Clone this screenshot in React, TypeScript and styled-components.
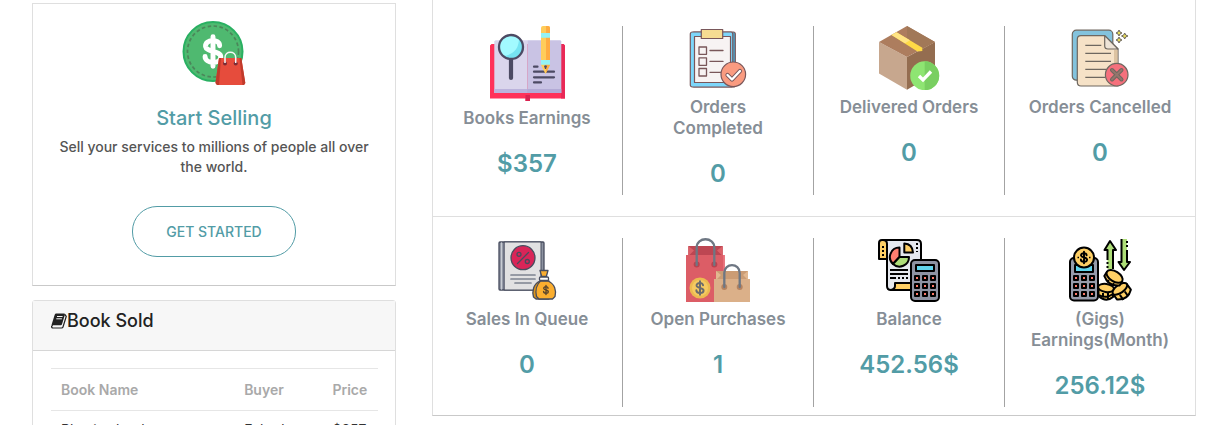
import React from 'react';
import styled, { createGlobalStyle } from 'styled-components';

const GlobalStyle = createGlobalStyle`
  *, *::before, *::after { box-sizing: border-box; }
  html { scrollbar-width: none; }
  body { margin: 0; background: #fff; font-family: Inter, "Liberation Sans", sans-serif; }
  h2, h3, p { margin: 0; }
`;

const teal = '#529ca6';

const Page = styled.main`
  display: grid;
  grid-template-columns: 91fr 191fr;
  gap: 36px;
  align-items: start;
  padding: 0 14px 0 32px;
`;

const Sidebar = styled.div`
  display: flex;
  flex-direction: column;
  gap: 14px;
  padding-top: 3px;
`;

const SellCard = styled.section`
  display: flex;
  flex-direction: column;
  align-items: center;
  padding: 17px 22px 28px;
  border: 1px solid #dfdfdf;
  border-bottom-color: #c9c9c9;
  text-align: center;
`;

const SellTitle = styled.h2`
  margin-top: 19px;
  color: ${teal};
  font-size: 20px;
  font-weight: 500;
  line-height: 28px;
`;

const SellText = styled.p`
  margin-top: 5px;
  color: #555;
  font-size: 14px;
  font-weight: 500;
  line-height: 20px;
`;

const OutlineButton = styled.button`
  margin-top: 29px;
  padding: 0 33px;
  height: 51px;
  border: 1px solid ${teal};
  border-radius: 25px;
  background: #fff;
  color: ${teal};
  font-family: inherit;
  font-size: 14px;
  font-weight: 500;
  text-transform: uppercase;
`;

const SoldCard = styled.section`
  border: 1px solid #dfdfdf;
  border-radius: 3px;
`;

const SoldHeader = styled.header`
  display: flex;
  align-items: flex-start;
  height: 50px;
  padding: 8px 18px;
  border-bottom: 1px solid #d6d6d6;
  background: #f7f7f7;
  color: #222;

  svg { margin-top: 4px; }
`;

const SoldTitle = styled.h3`
  font-size: 18px;
  font-weight: 500;
  line-height: 24px;
`;

const SoldBody = styled.div`
  padding: 17px 17px 17px 18px;
`;

const Table = styled.table`
  width: 100%;
  border-collapse: collapse;
  font-size: 14px;
  text-align: left;
`;

const HeadCell = styled.th<{ $width?: string }>`
  width: ${(p) => p.$width ?? 'auto'};
  height: 42px;
  padding: 0 10px;
  border-top: 1px solid #e6e6e6;
  border-bottom: 1px solid #e6e6e6;
  color: #a9a9a9;
  font-weight: 600;
`;

const BodyCell = styled.td`
  padding: 9px 10px;
  color: #333;
  line-height: 20px;
`;

const StatsCard = styled.section`
  border: 1px solid #dfdfdf;
  border-top: 0;
  border-bottom-color: #c9c9c9;
`;

const StatsRow = styled.div<{ $first?: boolean }>`
  display: grid;
  grid-template-columns: repeat(4, 1fr);
  margin: 0 -1px;
  padding: ${(p) => (p.$first ? '26px 0 21px' : '21px 0 8px')};
  border-bottom: ${(p) => (p.$first ? '1px solid #dfdfdf' : '0')};
`;

const Stat = styled.div`
  display: flex;
  flex-direction: column;
  align-items: center;
  padding: 0 21px 6px;
  border-right: 1px solid #a3a3a3;
  text-align: center;

  &:last-child { border-right-color: transparent; }
`;

const StatLabel = styled.h3`
  margin-top: 7px;
  color: #868e96;
  font-size: 17px;
  font-weight: 600;
  line-height: 21px;
`;

const StatValue = styled.p`
  margin-top: 19px;
  color: ${teal};
  font-size: 24px;
  font-weight: 600;
  line-height: 31px;
`;

const Icon = styled.svg.attrs({ 'aria-hidden': true })<{ $size?: number }>`
  display: block;
  flex: none;
  width: ${(p) => p.$size ?? 64}px;
  height: ${(p) => p.$size ?? 64}px;
`;

const Dollar = ({ x, y, s, color, w }: { x: number; y: number; s: number; color: string; w: number }) => (
  <path
    transform={`translate(${x} ${y}) scale(${s})`}
    d="M4 -3.5C4 -8 -5 -7.5 -4.5 -3C-4 .5 5 -.5 4.7 3.4C4.4 7.8 -4.8 7.6 -4.8 3M0 -9V9"
    fill="none" stroke={color} strokeWidth={w} strokeLinecap="round"
  />
);

const SellIcon = () => (
  <Icon viewBox="0 0 64 64">
    <circle cx="31" cy="30.500" r="29.500" fill="#4fb970" stroke="#29b062" strokeWidth="2" />
    <circle cx="31" cy="30.500" r="25.500" fill="none" stroke="#4b865a" strokeWidth="1.700" strokeDasharray="3.500 2.500" />
    <Dollar x={31} y={30.5} s={1.65} color="#fff" w={3} />
    <path d="M37 37H59.300L63.300 62L62 64H35L33.500 62Z" fill="#e64c3c" />
    <path d="M37 37H39L37 64H35L33.500 62ZM57.500 37H59.300L63.300 62L62 64H60.500Z" fill="#c03a2b" />
    <circle cx="43" cy="42.500" r="2" fill="#7d2c35" /><circle cx="53.700" cy="42.500" r="2" fill="#7d2c35" />
    <path d="M43 42V36.500C43 29.500 53.700 29.500 53.700 36.500V42" fill="none" stroke="#f7f7f7" strokeWidth="1.500" />
  </Icon>
);

const BookIcon = () => (
  <svg width="16" height="16" viewBox="0 0 16 16" aria-hidden="true">
    <path d="M13.800 1.500L15.300 3.300L12 14Q11.700 15 10.500 15H2Q.3 14.800 .6 12.800" fill="none" stroke="#222" strokeWidth="1.200" strokeLinejoin="round" />
    <path d="M5.200 .5H13Q14.200 .5 13.900 1.700L11 11.300Q10.700 12.200 9.700 12.200H2.200Q1.600 12.200 1.800 13.200H.7Q.3 12 .9 10.800L3.700 1.800Q4.100 .5 5.200 .5Z" fill="#222" />
    <path d="M6 3.500H11.600M5.300 5.800H10.900" stroke="#f7f7f7" strokeWidth="1" />
  </svg>
);

const EarningsIcon = () => (
  <Icon $size={75} viewBox="0 0 75 75">
    <path d="M1.500 18H73.500L75 19.500V72.500H40V75H35.500V72.500H0V19.500Z" fill="#ff3159" />
    <path d="M71 18H73.500L75 19.500V72.500H71Z" fill="#e92957" /><path d="M35.500 69H40V75H35.500Z" fill="#d92250" />
    <path d="M4.300 15.500L5.500 14.300H37.300V67H4.300Z" fill="#dad5ec" /><path d="M37.300 14.300H70.500L71.300 15.500V67H37.300Z" fill="#c9c3e4" />
    <path d="M4.300 63H37.300V67H4.300Z" fill="#bbb3dc" /><path d="M37.300 63H71.300V67H37.300Z" fill="#b3abd6" />
    <path d="M21 34V52" stroke="#4c4a63" strokeWidth="4.200" strokeLinecap="round" />
    <circle cx="21" cy="21" r="12" fill="#a2faff" /><path d="M29 12A12 12 0 0 1 13 30Q29 28 29 12Z" fill="#76e4f2" />
    <circle cx="21" cy="21" r="12" fill="none" stroke="#4c4a63" strokeWidth="2.300" />
    <path d="M44 40.700H47.500M44 45.700H64M44 51.300H64M44 56.400H51" stroke="#4c4a63" strokeWidth="2.200" strokeLinecap="round" />
    <path d="M51 2Q51 0 53 0H58Q60 0 60 2V39L55.500 48L51 39Z" fill="#ffcd5a" /><path d="M56 0H58Q60 0 60 2V39L56 47Z" fill="#ffac42" />
    <path d="M51 7H60V11.700H51ZM51 34H60V38.700H51Z" fill="#94f3f5" /><path d="M54 40Q55.500 38.500 57 40L56 43H55Z" fill="#4c4a63" />
  </Icon>
);

const CompletedIcon = () => (
  <Icon viewBox="0 0 64 64" stroke="#79575a" strokeWidth="1.200" strokeLinejoin="round" strokeLinecap="round">
    <rect x="6" y="6" width="43.300" height="55" rx="2" fill="#4aa9d3" />
    <rect x="4.300" y="6" width="42.500" height="55" rx="2" fill="#7dd6fa" />
    <path d="M8.500 10.500H44.500V56.500H8.500Z" fill="#f7f3f3" />
    <path d="M15.300 3.500H36.700V12.500H15.300Z" fill="#f6dc92" />
    <path d="M13 21H20.500V28.300H13ZM13 31.800H20.500V39.300H13ZM13 42.500H20.500V50H13ZM24 24.500H37M24 35.400H37M24 46.300H35" fill="none" strokeWidth="1.300" />
    <circle cx="47.300" cy="48.300" r="12.300" fill="#fa9b80" />
    <path d="M41.500 49L46 53.500L54 45" fill="none" strokeWidth="4.200" /><path d="M41.500 49L46 53.500L54 45" fill="none" stroke="#fff" strokeWidth="2.400" />
  </Icon>
);

const DeliveredIcon = () => (
  <Icon viewBox="0 0 64 64">
    <path d="M2 16L30 31V63.800L2 47.500Z" fill="#c7a78e" /><path d="M58 16L30 31V63.800L58 47.500Z" fill="#946d50" />
    <path d="M30 0L58 16L30 31L2 16Z" fill="#ad7d5e" /><path d="M30 0L58 16L44 23.500L30 15Z" fill="#a17858" />
    <path d="M14.500 9L19.500 6.300L45.300 21.800V25L40.500 25.500Z" fill="#ffda46" /><path d="M14.500 9L19.500 6.300L33 14.300L28 17.300Z" fill="#ffe484" />
    <circle cx="47.700" cy="49.700" r="14.500" fill="#8ee572" /><path d="M47.700 35.200A14.500 14.500 0 0 1 47.700 64.200Z" fill="#79cf61" />
    <path d="M42 50L46 54L54 45.500" fill="none" stroke="#fff" strokeWidth="3.300" />
  </Icon>
);

const CancelledIcon = () => (
  <Icon viewBox="0 0 64 64" stroke="#6e675f" strokeWidth="1.200" strokeLinejoin="round">
    <rect x="4.300" y="4.200" width="40.500" height="50" rx="4" fill="#83c3dd" />
    <path d="M13 9.700H36.700L50 23V60H13Q9.300 60 9.300 56V13.500Q9.300 9.700 13 9.700Z" fill="#f6e2c7" />
    <path d="M46 24H49.500V40H46Z" fill="#ddc3a1" stroke="none" />
    <path d="M36.700 9.700V20Q36.700 23 40 23H50Z" fill="#eee4d7" />
    <path d="M17.300 19.300H33.300M17.300 27.300H43M17.300 35.300H43M17.300 43.300H38M17.300 51.300H37" fill="none" />
    <circle cx="48.700" cy="48.700" r="11.300" fill="#f5707c" />
    <path d="M44 44L53.500 53.500M53.500 44L44 53.500" fill="none" strokeWidth="4" strokeLinecap="round" /><path d="M44 44L53.500 53.500M53.500 44L44 53.500" stroke="#93766c" strokeWidth="2" strokeLinecap="round" />
    <path d="M51 4L52 6L54 7L52 8L51 10L50 8L48 7L50 6ZM56.700 7L57.700 9L60 10L57.700 11L56.700 13L55.700 11L53.500 10L55.700 9ZM51 11L52 13L54 14L52 15L51 17L50 15L48 14L50 13Z" fill="#e7dc58" strokeWidth="1" />
  </Icon>
);

const QueueIcon = () => (
  <Icon viewBox="0 0 64 64" stroke="#474c5e" strokeWidth="1.300" strokeLinejoin="round" strokeLinecap="round">
    <rect x="4" y="4" width="45" height="48" rx="1" fill="#8d93a1" /><path d="M9.500 4H46V52H9.500Z" fill="#e1e1e2" strokeWidth="1" /><path d="M6.500 5V51" stroke="#c8ccd3" />
    <circle cx="28" cy="19.700" r="12" fill="#d92558" />
    <g fill="none"><circle cx="24" cy="16.300" r="2" /><circle cx="32.300" cy="23.500" r="2" /><path d="M33.500 14.500L22.500 25.500" /></g>
    <path d="M16 37H40M16 41H40M20 45H36" stroke="#7c8290" strokeWidth="1.700" />
    <path d="M45 43C38 46 37 54 38.500 59L41 61H54V43Z" fill="#dc951c" />
    <path d="M45.500 43H53C60 46 61.500 53 60 58.500L57.500 61H44L41.500 58.500C40 52 42 46 45.500 43Z" fill="#fbae2f" />
    <path d="M45 32.500H53L51.300 38.500H46.700Z" fill="#fbae2f" /><rect x="44.500" y="39" width="9" height="3.500" rx="1" fill="#fff" />
    <Dollar x={51} y={52} s={0.5} color="#59442c" w={2.8} />
  </Icon>
);

const PurchasesIcon = () => (
  <Icon viewBox="0 0 64 64">
    <path d="M2.300 8H36.700V18H2.300Z" fill="#bd4652" /><path d="M2.300 8L8 12.500L2.300 18ZM36.700 8L31 12.500L36.700 18Z" fill="#db6068" />
    <path d="M0 17H38.700V64H0Z" fill="#dc5d66" /><path d="M37 17H38.700V64H37Z" fill="#e8707a" />
    <circle cx="10.700" cy="26.500" r="3" fill="#b7444f" /><circle cx="28.300" cy="26.500" r="3" fill="#b7444f" />
    <path d="M10.700 27V9.500C10.700 -1.500 28.300 -1.500 28.300 9.500V27" fill="none" stroke="#6e7783" strokeWidth="2.300" strokeLinecap="round" />
    <circle cx="14" cy="50" r="10.500" fill="#ecba50" /><circle cx="14" cy="50" r="8" fill="#f6ca61" /><Dollar x={14} y={50} s={0.76} color="#6b6c6d" w={2.6} />
    <path d="M30 33H62V42H30Z" fill="#cb9c74" /><path d="M30 33L35 37L30 42ZM62 33L57 37L62 42Z" fill="#e2b890" />
    <path d="M28 41H64V64H28Z" fill="#dbb089" />
    <circle cx="38.300" cy="49" r="3" fill="#b58360" /><circle cx="53.700" cy="49" r="3" fill="#b58360" />
    <path d="M38.300 49V35C38.300 24.500 53.700 24.500 53.700 35V49" fill="none" stroke="#6e7783" strokeWidth="2.300" strokeLinecap="round" />
  </Icon>
);

const Keys = ({ x, y }: { x: number; y: number }) => (
  <>
    {[0, 8, 16].map((dy) => [0, 8, 16].map((dx) => (
      <rect key={`${dx}-${dy}`} x={x + dx - 2} y={y + dy - 2} width="4" height="4" fill="#ff7a69" stroke="#000" strokeWidth="2" />
    )))}
  </>
);

const BalanceIcon = () => (
  <Icon viewBox="0 0 64 64" stroke="#000" strokeWidth="2" strokeLinejoin="round">
    <path d="M10 21H2V5Q2 2 5 2H10Z" fill="#fecf65" /><path d="M6 8V18" strokeDasharray="2 2" />
    <path d="M6 2H40Q44 2 44 6V52H14Q10 52 10 48V6Q10 2 6 2Z" fill="#e5e8ee" />
    <path d="M18 45H36V52H14Q18 51 18 48Z" fill="#fecf65" />
    <path d="M22.500 9.500A9.500 9.500 0 0 0 16 26L22.500 19Z" fill="#ff7e70" /><path d="M22.500 19H32A9.500 9.500 0 0 1 16 26Z" fill="#aedd79" />
    <path d="M27.300 5.500Q35.500 6 36 14.500H27.300Z" fill="#fecf65" />
    <path d="M40 5V14" strokeDasharray="2 2" fill="none" /><path d="M13 32H31M13 36H31M13 40H19M21 40H23M25 40H27M29 40H31" fill="none" />
    <rect x="34" y="22" width="28" height="41" rx="4" fill="#8e93a2" /><path d="M39 27H57V33H39Z" fill="#62d5ed" /><Keys x={40} y={40} />
  </Icon>
);

const GigsIcon = () => (
  <Icon viewBox="0 0 64 64" stroke="#000" strokeWidth="2" strokeLinejoin="round">
    <rect x="2" y="20" width="28" height="42.500" rx="4" fill="#969baa" /><path d="M7 27H25V34H7Z" fill="#62d5ed" /><Keys x={8} y={40} />
    <circle cx="16" cy="19.500" r="10" fill="#fecf65" /><Dollar x={16} y={19.500} s={0.65} color="#000" w={3} />
    <path d="M9.500 19.500H11M21 19.500H22.500" strokeWidth="1.500" />
    <path d="M39.500 31V12H36.500L42 3L48 12H45V31Z" fill="#addd77" stroke="none" /><path d="M39.500 22V12H36.500L42 3L48 12H45V31M39.500 24V26M39.500 28V30" fill="none" />
    <path d="M53.500 1V24H50.500L56 32L62 24H59V1Z" fill="#addd77" stroke="none" /><path d="M53.500 1V24H50.500L56 32L62 24H59V12M59 9V7M59 5V3" fill="none" />
    <path d="M30.500 50V58Q38 65 45 59V50Z" fill="#fecf65" /><ellipse cx="38" cy="50" rx="8" ry="4" fill="#fecf65" transform="rotate(8 38 50)" />
    <path d="M35 55V61M40 55V61M31 57Q38 61 45 56" fill="none" />
    <g transform="rotate(-35 54 53)"><path d="M45 50V57Q54 64 62 57V50Z" fill="#fecf65" /><ellipse cx="53.500" cy="50" rx="8.500" ry="4" fill="#fecf65" /><path d="M50 55V61M56 55V61" /></g>
    <g transform="rotate(32 45 41)"><path d="M36 38V43Q45 50 54 43V38Z" fill="#fecf65" /><ellipse cx="45" cy="38" rx="9" ry="5" fill="#fecf65" /><path d="M42 44V47M48 44V47" /></g>
  </Icon>
);

const topStats = [
  { label: 'Books Earnings', value: '$357', Art: EarningsIcon },
  { label: 'Orders Completed', value: '0', Art: CompletedIcon },
  { label: 'Delivered Orders', value: '0', Art: DeliveredIcon },
  { label: 'Orders Cancelled', value: '0', Art: CancelledIcon },
];

const bottomStats = [
  { label: 'Sales In Queue', value: '0', Art: QueueIcon },
  { label: 'Open Purchases', value: '1', Art: PurchasesIcon },
  { label: 'Balance', value: '452.56$', Art: BalanceIcon },
  { label: '(Gigs) Earnings(Month)', value: '256.12$', Art: GigsIcon },
];

const renderStats = (items: typeof topStats) =>
  items.map(({ label, value, Art }) => (
    <Stat key={label}>
      <Art />
      <StatLabel>{label}</StatLabel>
      <StatValue>{value}</StatValue>
    </Stat>
  ));

export default function App() {
  return (
    <>
      <GlobalStyle />
      <Page>
        <Sidebar>
          <SellCard>
            <SellIcon />
            <SellTitle>Start Selling</SellTitle>
            <SellText>Sell your services to millions of people all over the world.</SellText>
            <OutlineButton type="button">Get Started</OutlineButton>
          </SellCard>
          <SoldCard>
            <SoldHeader>
              <BookIcon />
              <SoldTitle>Book Sold</SoldTitle>
            </SoldHeader>
            <SoldBody>
              <Table>
                <thead>
                  <tr>
                    <HeadCell>Book Name</HeadCell>
                    <HeadCell $width="27%">Buyer</HeadCell>
                    <HeadCell $width="17%">Price</HeadCell>
                  </tr>
                </thead>
                <tbody>
                  <tr>
                    <BodyCell>Physics book</BodyCell>
                    <BodyCell>Fahad</BodyCell>
                    <BodyCell>$357</BodyCell>
                  </tr>
                </tbody>
              </Table>
            </SoldBody>
          </SoldCard>
        </Sidebar>
        <StatsCard>
          <StatsRow $first>{renderStats(topStats)}</StatsRow>
          <StatsRow>{renderStats(bottomStats)}</StatsRow>
        </StatsCard>
      </Page>
    </>
  );
}
